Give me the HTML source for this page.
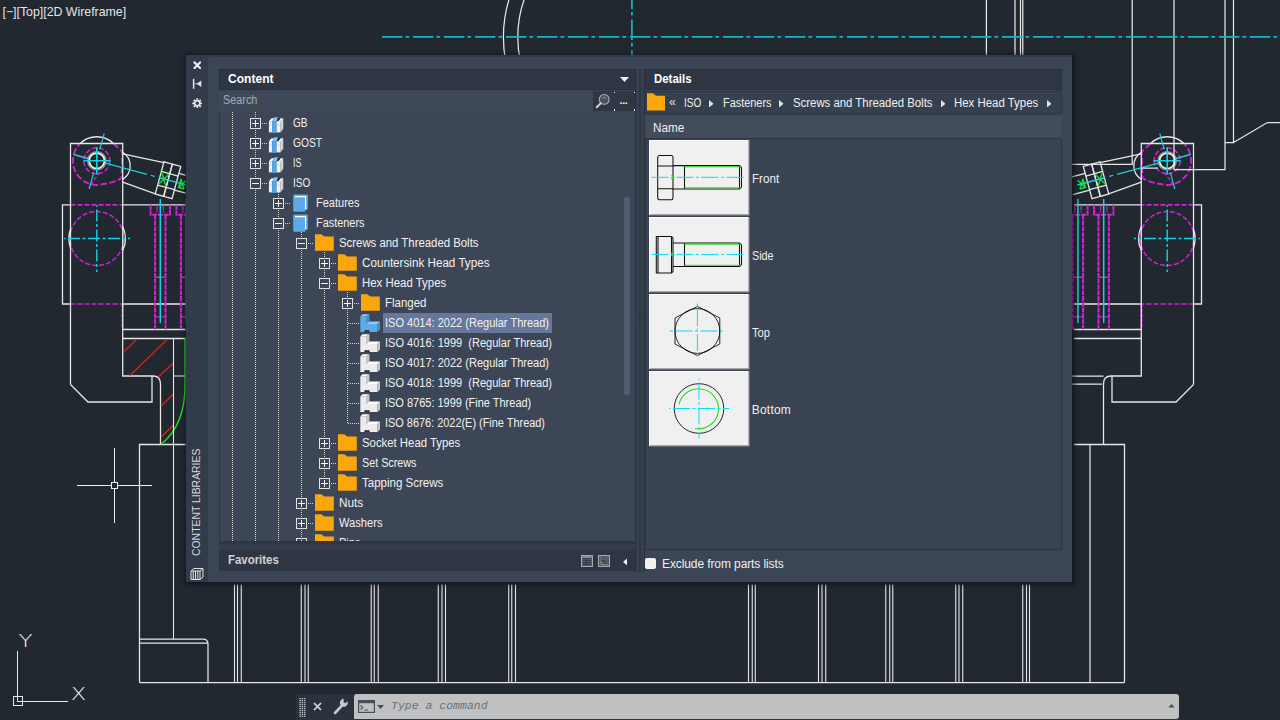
<!DOCTYPE html>
<html lang="en"><head><meta charset="utf-8"><title>Content Libraries</title>
<style>
html,body{margin:0;padding:0}
body{width:1280px;height:720px;overflow:hidden;position:relative;background:#212830;font-family:"Liberation Sans",sans-serif;font-size:12px;color:#f0f0f0}
#bg{position:absolute;left:0;top:0}
.abs{position:absolute}
#vpl{position:absolute;left:2.5px;top:5px;font-size:12.4px;color:#e4e4e4;white-space:nowrap;letter-spacing:-0.03px}
#pal{position:absolute;left:186px;top:55px;width:886px;height:526.5px;background:#323b49;box-shadow:0.5px 0.5px 4px 2px rgba(8,11,16,.55)}
#main{position:absolute;left:21.7px;top:2px;right:0;bottom:0;background:#3c4556;border-top-left-radius:3px}
#strip{position:absolute;left:0;top:0;width:22px;height:526.5px}
#vt{position:absolute;left:3.6px;top:501.3px;transform:rotate(-90deg) scaleX(0.905);transform-origin:0 0;font-size:11.5px;color:#d4d7dc;white-space:nowrap}
.hdr{position:absolute;top:13.7px;height:21px;background:#2e3643;font-weight:bold;font-size:12px;line-height:21.4px;color:#ffffff;box-shadow:inset 0 0 0 1px #29303b}
#search{position:absolute;left:33px;top:36px;width:374.5px;height:20px;background:#3f4858;color:#a4aab3;line-height:19px;font-size:12px}
#sbtn{position:absolute;left:407.3px;top:36px;width:19.7px;height:20px;background:#2f3744}
#dots{position:absolute;left:427px;top:36px;width:22.3px;height:20px;background:#2f3744}
#tree{position:absolute;left:33px;top:57px;width:416.5px;height:429px;overflow:hidden;background:#3d4656;border-bottom:3px solid #2e3643;box-shadow:inset 1px 0 0 0 #303845}
.tlines{position:absolute;left:0;top:0}
.tic{position:absolute;line-height:0}
.tl{position:absolute;height:19px;line-height:19px;white-space:pre;font-size:12px;color:#f2f2f2;padding:0 2.5px}
.tl.sel{background:#66779b;margin-top:-0.7px;height:19.7px;line-height:20.4px;width:164.2px}
.cd{position:absolute;width:1.2px;height:1.4px;background:#f0f0f0}
#sb{position:absolute;left:405px;top:85px;width:5.5px;height:198px;background:#525d70;border-radius:3px}
#gap{position:absolute;left:33px;top:489px;width:416.5px;height:6px;background:#343d4b}
#fav{position:absolute;left:33px;top:495px;width:417px;height:21px;background:#2e3643;font-weight:bold;font-size:12px;line-height:21px;color:#d0d3d8}
#split{position:absolute;left:449.4px;top:13.5px;width:7.4px;height:503px;background:#374050;border-left:1px solid #28303b;border-right:1px solid #2b333f}
#split:before{content:'';position:absolute;left:2.5px;top:0;width:2.6px;height:100%;background:#2f3743}
#bc{position:absolute;left:459px;top:36px;width:416.5px;height:23px;background:#36404e;line-height:25px;white-space:nowrap;box-shadow:inset 0 0 0 1px #2d3542}
#nm{position:absolute;left:459px;top:61px;width:416.5px;height:23px;background:#424c5c;line-height:25px;box-shadow:inset 0 -1px 0 0 #2d3542}
#list{position:absolute;left:459px;top:84px;width:415px;height:410px;border-right:1px solid #2c3441;border-bottom:1px solid #2c3441;border-left:1px solid #2c3441;background:#3a4352}
.thumbs{position:absolute;left:-1px;top:0}
.lbl{position:absolute;left:105.8px;font-size:12px;line-height:14px;white-space:nowrap}
#cb{position:absolute;left:459px;top:503px;width:11px;height:11px;border-radius:2px;background:#f2f2f2}
#cbl{position:absolute;left:476px;top:502px;line-height:15px;white-space:nowrap}
#cmd{position:absolute;left:296px;top:694px;width:883px;height:26px;background:#2b323d}
#cin{position:absolute;left:58px;top:0;width:825px;height:24.7px;background:#bfc0c2;border-radius:3px 3px 3px 0}
#ctx{position:absolute;left:37px;top:4px;font-family:"Liberation Mono",monospace;font-style:italic;font-size:11.5px;color:#6c7076;white-space:pre;line-height:16px}
</style></head><body>
<svg id="bg" width="1280" height="720" viewBox="0 0 1280 720">
<defs><clipPath id="lefthalf"><rect x="0" y="0" width="632" height="60"/></clipPath><clipPath id="leftclip"><rect x="0" y="0" width="185.6" height="720"/></clipPath></defs>
<g clip-path="url(#leftclip)"><g stroke="#d222d6" stroke-width="1.9" fill="none" stroke-dasharray="6.5 2.5">
<path d="M113.5,143.6 L122.3,151.7 L121.5,178 L118,180.2 Q108,184 96.8,185 A24.2,24.2 0 0 1 79.5,144.2"/>
</g>
<g stroke="#d222d6" stroke-width="1.5" fill="none" stroke-dasharray="5 2">
<circle cx="96.8" cy="160.8" r="13"/>
<circle cx="96.8" cy="238.5" r="27"/>
<path d="M70.5,204.8 H122.5 M70.5,304 H122.5" stroke-width="1.7"/>
<path d="M122.5,304 V329.5" stroke-width="1.9" stroke-dasharray="3.5 1.5"/>
<path d="M99.8,171.8 L88.8,187.8" stroke-width="1.2" stroke-dasharray="4 2"/>
</g>
<g stroke="#e6e6e6" stroke-width="1.3" fill="none">
<path d="M70.5,384.5 V143.5 H122.7 V376 H153 Q160.5,376 160.5,384 V444.5"/>
<path d="M70.5,384.5 L88,402 H152 V376"/>
<path d="M190,204.8 H122.5 M70,204.8 H62.5 V304 H70 M122.5,304 H190"/>
<path d="M122.5,329.5 H190 M122.5,338.5 H190"/>
<path d="M190,444.5 H139.5 V682.5"/>
<path d="M80.2,143.5 A24.1,24.1 0 0 1 113.4,143.5" stroke-width="1.5"/>
<path d="M70.5,229 A28.5,28.5 0 0 0 70.5,248"/>
<path d="M122.7,226.5 A28.5,28.5 0 0 1 122.7,250.5"/>
<circle cx="96.8" cy="160.8" r="9.2" stroke="#86a886" stroke-width="1.2"/>
<circle cx="96.8" cy="160.8" r="7.7" stroke="#f4f4f4" stroke-width="1.7"/>
<path d="M122.7,152.2 A16.1,16.1 0 0 1 122.7,179.4"/>
<path d="M122.7,153.8 L164,162.7 M122.7,182.2 L155.4,193.8"/>
<g transform="translate(96.8,160.8) rotate(15.1)">
<rect x="65.1" y="-16.5" width="8.7" height="33.4"/>
<rect x="73.8" y="-16.5" width="8.7" height="33.4"/>
<path d="M65.1,-6.5 H82.5 M65.1,7.7 H82.5"/>
<path d="M82.5,-9.2 H100 M82.5,8 H100"/>
</g>
</g>
<g stroke="#20e020" stroke-width="1.4" fill="none" transform="translate(96.8,160.8) rotate(15.1)">
<path d="M65.6,-5.8 L73.3,6.6 M73.3,-5.8 L65.6,6.6"/>
<path d="M86,-4.5 L91.5,4.5 M91.5,-4.5 L86,4.5 M86,-4.5 V4.5 H91.5"/>
</g>
<g stroke="#18d2e2" stroke-width="1.4" fill="none">
<path d="M83.3,160.8 H110.6 M96.8,147.2 V174.4" stroke-width="1.6"/>
<g transform="translate(96.8,160.8) rotate(15.1)"><path d="M-24,0 H-9 M9,0 H52 M56,0 H60 M64,0 H93" /><path d="M0,-28.5 V-12 M0,12 V29" stroke-width="1.2"/></g>
<path d="M64,238.5 H130" stroke-dasharray="12 2.5 3 2.5" stroke-dashoffset="-4"/>
<path d="M96.8,205.5 V272" stroke-dasharray="12 2.5 3 2.5" stroke-dashoffset="-4"/>
</g>
<g stroke="#d222d6" stroke-width="2" fill="none" stroke-dasharray="5 0.8">
<path d="M150.60000000000002,204.8 V214.8 H170.0 V204.8"/>
<path d="M155.10000000000002,214.8 V329.4 M165.5,214.8 V329.4"/>
<path d="M157.10000000000002,205 V212.5 M163.5,205 V212.5" stroke-width="1.3"/>
<path d="M155.10000000000002,277.3 H165.5 M155.10000000000002,316.9 H165.5" stroke-dasharray="none" stroke-width="1.4"/>
</g>
<path d="M160.3,199 V323" stroke="#18d2e2" stroke-width="1.5" fill="none"/>
<g stroke="#d222d6" stroke-width="2" fill="none" stroke-dasharray="5 0.8">
<path d="M176.4,204.8 V214.8 H195.79999999999998 V204.8"/>
<path d="M180.9,214.8 V329.4 M191.29999999999998,214.8 V329.4"/>
<path d="M182.9,205 V212.5 M189.29999999999998,205 V212.5" stroke-width="1.3"/>
<path d="M180.9,277.3 H191.29999999999998 M180.9,316.9 H191.29999999999998" stroke-dasharray="none" stroke-width="1.4"/>
</g>
<path d="M186.1,199 V323" stroke="#18d2e2" stroke-width="1.5" fill="none"/></g>
<g transform="translate(1264,0) scale(-1,1)"><g stroke="#d222d6" stroke-width="1.9" fill="none" stroke-dasharray="6.5 2.5">
<path d="M113.5,143.6 L122.3,151.7 L121.5,178 L118,180.2 Q108,184 96.8,185 A24.2,24.2 0 0 1 79.5,144.2"/>
</g>
<g stroke="#d222d6" stroke-width="1.5" fill="none" stroke-dasharray="5 2">
<circle cx="96.8" cy="160.8" r="13"/>
<circle cx="96.8" cy="238.5" r="27"/>
<path d="M70.5,204.8 H122.5 M70.5,304 H122.5" stroke-width="1.7"/>
<path d="M122.5,304 V329.5" stroke-width="1.9" stroke-dasharray="3.5 1.5"/>
<path d="M99.8,171.8 L88.8,187.8" stroke-width="1.2" stroke-dasharray="4 2"/>
</g>
<g stroke="#e6e6e6" stroke-width="1.3" fill="none">
<path d="M70.5,384.5 V143.5 H122.7 V376 H153 Q160.5,376 160.5,384 V444.5"/>
<path d="M70.5,384.5 L88,402 H152 V376"/>
<path d="M190,204.8 H122.5 M70,204.8 H62.5 V304 H70 M122.5,304 H190"/>
<path d="M122.5,329.5 H190 M122.5,338.5 H190"/>
<path d="M190,444.5 H139.5 V682.5"/>
<path d="M80.2,143.5 A24.1,24.1 0 0 1 113.4,143.5" stroke-width="1.5"/>
<path d="M70.5,229 A28.5,28.5 0 0 0 70.5,248"/>
<path d="M122.7,226.5 A28.5,28.5 0 0 1 122.7,250.5"/>
<circle cx="96.8" cy="160.8" r="9.2" stroke="#86a886" stroke-width="1.2"/>
<circle cx="96.8" cy="160.8" r="7.7" stroke="#f4f4f4" stroke-width="1.7"/>
<path d="M122.7,152.2 A16.1,16.1 0 0 1 122.7,179.4"/>
<path d="M122.7,153.8 L164,162.7 M122.7,182.2 L155.4,193.8"/>
<g transform="translate(96.8,160.8) rotate(15.1)">
<rect x="65.1" y="-16.5" width="8.7" height="33.4"/>
<rect x="73.8" y="-16.5" width="8.7" height="33.4"/>
<path d="M65.1,-6.5 H82.5 M65.1,7.7 H82.5"/>
<path d="M82.5,-9.2 H100 M82.5,8 H100"/>
</g>
</g>
<g stroke="#20e020" stroke-width="1.4" fill="none" transform="translate(96.8,160.8) rotate(15.1)">
<path d="M65.6,-5.8 L73.3,6.6 M73.3,-5.8 L65.6,6.6"/>
<path d="M86,-4.5 L91.5,4.5 M91.5,-4.5 L86,4.5 M86,-4.5 V4.5 H91.5"/>
</g>
<g stroke="#18d2e2" stroke-width="1.4" fill="none">
<path d="M83.3,160.8 H110.6 M96.8,147.2 V174.4" stroke-width="1.6"/>
<g transform="translate(96.8,160.8) rotate(15.1)"><path d="M-24,0 H-9 M9,0 H52 M56,0 H60 M64,0 H93" /><path d="M0,-28.5 V-12 M0,12 V29" stroke-width="1.2"/></g>
<path d="M64,238.5 H130" stroke-dasharray="12 2.5 3 2.5" stroke-dashoffset="-4"/>
<path d="M96.8,205.5 V272" stroke-dasharray="12 2.5 3 2.5" stroke-dashoffset="-4"/>
</g>
<g stroke="#d222d6" stroke-width="2" fill="none" stroke-dasharray="5 0.8">
<path d="M150.60000000000002,204.8 V214.8 H170.0 V204.8"/>
<path d="M155.10000000000002,214.8 V329.4 M165.5,214.8 V329.4"/>
<path d="M157.10000000000002,205 V212.5 M163.5,205 V212.5" stroke-width="1.3"/>
<path d="M155.10000000000002,277.3 H165.5 M155.10000000000002,316.9 H165.5" stroke-dasharray="none" stroke-width="1.4"/>
</g>
<path d="M160.3,199 V323" stroke="#18d2e2" stroke-width="1.5" fill="none"/>
<g stroke="#d222d6" stroke-width="2" fill="none" stroke-dasharray="5 0.8">
<path d="M176.4,204.8 V214.8 H195.79999999999998 V204.8"/>
<path d="M180.9,214.8 V329.4 M191.29999999999998,214.8 V329.4"/>
<path d="M182.9,205 V212.5 M189.29999999999998,205 V212.5" stroke-width="1.3"/>
<path d="M180.9,277.3 H191.29999999999998 M180.9,316.9 H191.29999999999998" stroke-dasharray="none" stroke-width="1.4"/>
</g>
<path d="M186.1,199 V323" stroke="#18d2e2" stroke-width="1.5" fill="none"/></g>
<g stroke="#e02020" stroke-width="1.2" fill="none">
<path d="M123.5,352 L137,339 M130,375.5 L167,339.5 M158,377 L173.5,363 M161,406 L173.5,394 M161,437 L173.5,425"/>
</g>
<path d="M185,338.5 V384 Q185.5,425 161,444.3" stroke="#20e020" stroke-width="1.4" fill="none"/>
<g stroke="#e6e6e6" stroke-width="1.25" fill="none">
<path d="M173.5,338.5 V639 M173.5,376 H185" stroke-width="1.1"/>
<path d="M139.5,639 H203 Q208,639 208,644 V682.5 M139.5,643 H208"/>
<path d="M1070,376 H1103.5 M1070,384 H1102"/>
<path d="M1090,444.5 V682.5"/>
<path d="M1132.2,0 V164.4 H1070"/>
<path d="M1174,0 V169.5 H1225 V0 M1141.5,168 H1158"/>
<path d="M1233.5,0 V142.5 H1225 M1233.5,142.5 L1267.4,122.5 H1280"/>
<path d="M986.4,0 V56 M1015,0 V56 M1020.5,0 V56 M1022.8,0 V56"/>
<circle cx="632" cy="37" r="128.6" clip-path="url(#lefthalf)"/>
<circle cx="632" cy="37" r="114.2" clip-path="url(#lefthalf)"/>
<path d="M139.5,682.5 H1124.5"/>
<path d="M234.50,584.5 V682.5 M1029.50,584.5 V682.5 M237.50,584.5 V682.5 M1026.50,584.5 V682.5 M241.25,584.5 V682.5 M1022.75,584.5 V682.5 M301.25,584.5 V682.5 M962.75,584.5 V682.5 M305.00,584.5 V682.5 M959.00,584.5 V682.5 M308.25,584.5 V682.5 M955.75,584.5 V682.5 M371.25,584.5 V682.5 M892.75,584.5 V682.5 M374.25,584.5 V682.5 M889.75,584.5 V682.5 M378.25,584.5 V682.5 M885.75,584.5 V682.5 M438.25,584.5 V682.5 M825.75,584.5 V682.5 M442.00,584.5 V682.5 M822.00,584.5 V682.5 M445.50,584.5 V682.5 M818.50,584.5 V682.5 M508.75,584.5 V682.5 M755.25,584.5 V682.5 M511.75,584.5 V682.5 M752.25,584.5 V682.5 M515.50,584.5 V682.5 M748.50,584.5 V682.5" stroke-width="1.1"/>
</g>
<path d="M382,36.9 H1280" stroke="#1ab4c0" stroke-width="1.9" fill="none" stroke-dasharray="20.4 3 3.7 3.9"/>
<path d="M631.9,0 V56" stroke="#1ab4c0" stroke-width="1.7" fill="none" stroke-dasharray="20.4 3 3.7 3.9" stroke-dashoffset="11.5"/>
<g stroke="#f0f0f0" stroke-width="1" fill="none" shape-rendering="crispEdges">
<path d="M77,485.5 H111 M118,485.5 H152 M114.5,448 V482 M114.5,489 V522.5"/>
<rect x="111.5" y="482.5" width="6" height="6"/>
</g>
<g stroke="#e8e8e8" stroke-width="1" fill="none" shape-rendering="crispEdges">
<rect x="13.5" y="696.5" width="9" height="9"/>
<path d="M17.5,651 V701.5 H67.5"/>
</g>
<g fill="#f0f0f0" font-family="DejaVu Sans Light, DejaVu Sans, Liberation Sans, sans-serif" font-weight="200" font-size="17" text-anchor="middle">
<text x="25.5" y="647.2" transform="translate(25.5,0) scale(1.36,1) translate(-25.5,0)">Y</text>
<text x="78.5" y="700.4" transform="translate(78.5,0) scale(1.33,1) translate(-78.5,0)">X</text>
</g>
</svg>
<div id="vpl">[−][Top][2D Wireframe]</div>
<div id="pal">
<div id="main"></div><div id="strip">
<svg class="abs" style="left:6.7px;top:5.8px" width="8.6" height="8.6" viewBox="0 0 8.6 8.6"><path d="M0.8,0.8 L7.8,7.8 M7.8,0.8 L0.8,7.8" stroke="#f0f0f0" stroke-width="2.1"/></svg>
<svg class="abs" style="left:6px;top:23px" width="10" height="12" viewBox="0 0 10 12"><path d="M1.6,0.8 V10.8" stroke="#e4e4e4" stroke-width="1.5"/><path d="M4.6,5.8 L9.3,2.6 V9Z" fill="#e4e4e4"/><path d="M2.3,5.8 H5" stroke="#b8bcc4" stroke-width="1"/></svg>
<svg class="abs" style="left:5.7px;top:42.7px" width="10.6" height="10.6" viewBox="0 0 12 12"><g stroke="#e8e8e8" stroke-width="2"><path d="M6,0.3 V11.7 M0.3,6 H11.7 M2,2 L10,10 M10,2 L2,10"/></g><circle cx="6" cy="6" r="3.6" fill="#e8e8e8"/><circle cx="6" cy="6" r="1.9" fill="#323b49"/></svg>
<div id="vt">CONTENT LIBRARIES</div>
<svg class="abs" style="left:4px;top:512px" width="14" height="14" viewBox="0 0 14 14"><g stroke="#e0e0e0" stroke-width="1" fill="none"><path d="M1,4 L4,1.5 H13 L10,4Z M1,4 V12.5 H10 V4 M10,12.5 L13,10 V1.5 M3.2,4 V12.5 M5.5,4 V12.5 M7.8,4 V12.5"/></g></svg>
</div>
<div class="hdr" style="left:33px;width:416.5px"><span style="margin-left:9px;letter-spacing:0.046px">Content</span><svg class="abs" style="left:401px;top:8px" width="9" height="5" viewBox="0 0 9 5"><path d="M0,0 H9 L4.5,5Z" fill="#f0f0f0"/></svg></div>
<div id="search"><span style="margin-left:4px;display:inline-block;transform:scaleX(0.9047);transform-origin:0 50%">Search</span></div>
<div id="sbtn"><svg class="abs" style="left:2px;top:2px" width="16" height="17" viewBox="0 0 16 17"><circle cx="9.2" cy="6.4" r="4.9" stroke="#a9aeb6" stroke-width="1.1" fill="#4a5261"/><ellipse cx="9.4" cy="4.6" rx="2.2" ry="1.2" fill="#6a7280"/><path d="M5.6,10.4 L1.7,14.2" stroke="#d6d6d6" stroke-width="2" stroke-linecap="round"/></svg></div>
<div id="dots"><span style="position:absolute;left:6.6px;top:2.2px;font-size:10.5px;font-weight:bold;letter-spacing:-0.3px;color:#f4f4f4;line-height:14px">...</span><i class="cd" style="left:0.5px;top:0.8px"></i><i class="cd" style="left:20.8px;top:0.8px"></i><i class="cd" style="left:0.5px;top:18.2px"></i><i class="cd" style="left:20.8px;top:18.2px"></i></div>
<div id="tree"><svg class="tlines" width="417" height="429" viewBox="0 0 417 429" shape-rendering="crispEdges">
<g stroke="#d8d8d8" stroke-width="1" stroke-dasharray="1 1" fill="none">
<path d="M13.5,0 V429"/>
<path d="M36.5,0 V429"/>
<path d="M59.5,80 V429"/>
<path d="M82.5,120 V429"/>
<path d="M105.5,140 V371"/>
<path d="M128.5,180 V311"/>
<path d="M43.0,11.5 H49.0"/>
<path d="M43.0,31.5 H49.0"/>
<path d="M43.0,51.5 H49.0"/>
<path d="M43.0,71.5 H49.0"/>
<path d="M66.0,91.5 H72.0"/>
<path d="M66.0,111.5 H72.0"/>
<path d="M89.0,131.5 H95.0"/>
<path d="M112.0,151.5 H118.0"/>
<path d="M112.0,171.5 H118.0"/>
<path d="M135.0,191.5 H141.0"/>
<path d="M129.0,211.5 H141.0"/>
<path d="M129.0,231.5 H141.0"/>
<path d="M129.0,251.5 H141.0"/>
<path d="M129.0,271.5 H141.0"/>
<path d="M129.0,291.5 H141.0"/>
<path d="M129.0,311.5 H141.0"/>
<path d="M112.0,331.5 H118.0"/>
<path d="M112.0,351.5 H118.0"/>
<path d="M112.0,371.5 H118.0"/>
<path d="M89.0,391.5 H95.0"/>
<path d="M89.0,411.5 H95.0"/>
<path d="M89.0,431.5 H95.0"/>
</g>
<rect x="31.5" y="6.5" width="10" height="10" fill="#3d4656" stroke="#e4e4e4" stroke-width="1"/>
<path d="M33.0,11.5 H40.0" stroke="#f4f4f4" stroke-width="1"/>
<path d="M36.5,8.0 V15.0" stroke="#f4f4f4" stroke-width="1"/>
<rect x="31.5" y="26.5" width="10" height="10" fill="#3d4656" stroke="#e4e4e4" stroke-width="1"/>
<path d="M33.0,31.5 H40.0" stroke="#f4f4f4" stroke-width="1"/>
<path d="M36.5,28.0 V35.0" stroke="#f4f4f4" stroke-width="1"/>
<rect x="31.5" y="46.5" width="10" height="10" fill="#3d4656" stroke="#e4e4e4" stroke-width="1"/>
<path d="M33.0,51.5 H40.0" stroke="#f4f4f4" stroke-width="1"/>
<path d="M36.5,48.0 V55.0" stroke="#f4f4f4" stroke-width="1"/>
<rect x="31.5" y="66.5" width="10" height="10" fill="#3d4656" stroke="#e4e4e4" stroke-width="1"/>
<path d="M33.0,71.5 H40.0" stroke="#f4f4f4" stroke-width="1"/>
<rect x="54.5" y="86.5" width="10" height="10" fill="#3d4656" stroke="#e4e4e4" stroke-width="1"/>
<path d="M56.0,91.5 H63.0" stroke="#f4f4f4" stroke-width="1"/>
<path d="M59.5,88.0 V95.0" stroke="#f4f4f4" stroke-width="1"/>
<rect x="54.5" y="106.5" width="10" height="10" fill="#3d4656" stroke="#e4e4e4" stroke-width="1"/>
<path d="M56.0,111.5 H63.0" stroke="#f4f4f4" stroke-width="1"/>
<rect x="77.5" y="126.5" width="10" height="10" fill="#3d4656" stroke="#e4e4e4" stroke-width="1"/>
<path d="M79.0,131.5 H86.0" stroke="#f4f4f4" stroke-width="1"/>
<rect x="100.5" y="146.5" width="10" height="10" fill="#3d4656" stroke="#e4e4e4" stroke-width="1"/>
<path d="M102.0,151.5 H109.0" stroke="#f4f4f4" stroke-width="1"/>
<path d="M105.5,148.0 V155.0" stroke="#f4f4f4" stroke-width="1"/>
<rect x="100.5" y="166.5" width="10" height="10" fill="#3d4656" stroke="#e4e4e4" stroke-width="1"/>
<path d="M102.0,171.5 H109.0" stroke="#f4f4f4" stroke-width="1"/>
<rect x="123.5" y="186.5" width="10" height="10" fill="#3d4656" stroke="#e4e4e4" stroke-width="1"/>
<path d="M125.0,191.5 H132.0" stroke="#f4f4f4" stroke-width="1"/>
<path d="M128.5,188.0 V195.0" stroke="#f4f4f4" stroke-width="1"/>
<rect x="100.5" y="326.5" width="10" height="10" fill="#3d4656" stroke="#e4e4e4" stroke-width="1"/>
<path d="M102.0,331.5 H109.0" stroke="#f4f4f4" stroke-width="1"/>
<path d="M105.5,328.0 V335.0" stroke="#f4f4f4" stroke-width="1"/>
<rect x="100.5" y="346.5" width="10" height="10" fill="#3d4656" stroke="#e4e4e4" stroke-width="1"/>
<path d="M102.0,351.5 H109.0" stroke="#f4f4f4" stroke-width="1"/>
<path d="M105.5,348.0 V355.0" stroke="#f4f4f4" stroke-width="1"/>
<rect x="100.5" y="366.5" width="10" height="10" fill="#3d4656" stroke="#e4e4e4" stroke-width="1"/>
<path d="M102.0,371.5 H109.0" stroke="#f4f4f4" stroke-width="1"/>
<path d="M105.5,368.0 V375.0" stroke="#f4f4f4" stroke-width="1"/>
<rect x="77.5" y="386.5" width="10" height="10" fill="#3d4656" stroke="#e4e4e4" stroke-width="1"/>
<path d="M79.0,391.5 H86.0" stroke="#f4f4f4" stroke-width="1"/>
<path d="M82.5,388.0 V395.0" stroke="#f4f4f4" stroke-width="1"/>
<rect x="77.5" y="406.5" width="10" height="10" fill="#3d4656" stroke="#e4e4e4" stroke-width="1"/>
<path d="M79.0,411.5 H86.0" stroke="#f4f4f4" stroke-width="1"/>
<path d="M82.5,408.0 V415.0" stroke="#f4f4f4" stroke-width="1"/>
<rect x="77.5" y="426.5" width="10" height="10" fill="#3d4656" stroke="#e4e4e4" stroke-width="1"/>
<path d="M79.0,431.5 H86.0" stroke="#f4f4f4" stroke-width="1"/>
<path d="M82.5,428.0 V435.0" stroke="#f4f4f4" stroke-width="1"/>
</svg>
<div class="tic" style="left:49.0px;top:5px"><svg class="ic" width="16" height="16" viewBox="0 0 16 16"><path d="M12.3,4.2 L15.25,1.25 V11.7 L12.3,15.4Z" fill="#d4d4d4"/><path d="M0.9,4.2 L3.6,1.2 H6.2 L4.2,4.2Z" fill="#ffffff"/><path d="M4.2,4.2 L6.6,0.3 H10 L8.6,4.2Z" fill="#7cc4f8"/><path d="M8.6,4.2 L9.9,1.3 H12.4 L10.4,4.2Z" fill="#0f3a44"/><path d="M10.4,4.2 L12.8,1.25 H15.25 L12.3,4.2Z" fill="#ffffff"/><rect x="0.9" y="4.2" width="3.3" height="11.2" fill="#f1f1f1"/><rect x="4.2" y="4.2" width="4.4" height="11.7" fill="#4fabf0"/><rect x="8.6" y="4.2" width="3.7" height="11.2" fill="#f1f1f1"/><path d="M0.9,8.2 H12.3" stroke="#9aa0a8" stroke-width="0.5" opacity="0.7"/></svg></div>
<div class="tl" style="left:71.6px;top:2px"><span style="display:inline-block;transform:scaleX(0.8363);transform-origin:0 50%">GB</span></div>
<div class="tic" style="left:49.0px;top:25px"><svg class="ic" width="16" height="16" viewBox="0 0 16 16"><path d="M12.3,4.2 L15.25,1.25 V11.7 L12.3,15.4Z" fill="#d4d4d4"/><path d="M0.9,4.2 L3.6,1.2 H6.2 L4.2,4.2Z" fill="#ffffff"/><path d="M4.2,4.2 L6.6,0.3 H10 L8.6,4.2Z" fill="#7cc4f8"/><path d="M8.6,4.2 L9.9,1.3 H12.4 L10.4,4.2Z" fill="#0f3a44"/><path d="M10.4,4.2 L12.8,1.25 H15.25 L12.3,4.2Z" fill="#ffffff"/><rect x="0.9" y="4.2" width="3.3" height="11.2" fill="#f1f1f1"/><rect x="4.2" y="4.2" width="4.4" height="11.7" fill="#4fabf0"/><rect x="8.6" y="4.2" width="3.7" height="11.2" fill="#f1f1f1"/><path d="M0.9,8.2 H12.3" stroke="#9aa0a8" stroke-width="0.5" opacity="0.7"/></svg></div>
<div class="tl" style="left:71.6px;top:22px"><span style="display:inline-block;transform:scaleX(0.8529);transform-origin:0 50%">GOST</span></div>
<div class="tic" style="left:49.0px;top:45px"><svg class="ic" width="16" height="16" viewBox="0 0 16 16"><path d="M12.3,4.2 L15.25,1.25 V11.7 L12.3,15.4Z" fill="#d4d4d4"/><path d="M0.9,4.2 L3.6,1.2 H6.2 L4.2,4.2Z" fill="#ffffff"/><path d="M4.2,4.2 L6.6,0.3 H10 L8.6,4.2Z" fill="#7cc4f8"/><path d="M8.6,4.2 L9.9,1.3 H12.4 L10.4,4.2Z" fill="#0f3a44"/><path d="M10.4,4.2 L12.8,1.25 H15.25 L12.3,4.2Z" fill="#ffffff"/><rect x="0.9" y="4.2" width="3.3" height="11.2" fill="#f1f1f1"/><rect x="4.2" y="4.2" width="4.4" height="11.7" fill="#4fabf0"/><rect x="8.6" y="4.2" width="3.7" height="11.2" fill="#f1f1f1"/><path d="M0.9,8.2 H12.3" stroke="#9aa0a8" stroke-width="0.5" opacity="0.7"/></svg></div>
<div class="tl" style="left:71.6px;top:42px"><span style="display:inline-block;transform:scaleX(0.7497);transform-origin:0 50%">IS</span></div>
<div class="tic" style="left:49.0px;top:65px"><svg class="ic" width="16" height="16" viewBox="0 0 16 16"><path d="M12.3,4.2 L15.25,1.25 V11.7 L12.3,15.4Z" fill="#d4d4d4"/><path d="M0.9,4.2 L3.6,1.2 H6.2 L4.2,4.2Z" fill="#ffffff"/><path d="M4.2,4.2 L6.6,0.3 H10 L8.6,4.2Z" fill="#7cc4f8"/><path d="M8.6,4.2 L9.9,1.3 H12.4 L10.4,4.2Z" fill="#0f3a44"/><path d="M10.4,4.2 L12.8,1.25 H15.25 L12.3,4.2Z" fill="#ffffff"/><rect x="0.9" y="4.2" width="3.3" height="11.2" fill="#f1f1f1"/><rect x="4.2" y="4.2" width="4.4" height="11.7" fill="#4fabf0"/><rect x="8.6" y="4.2" width="3.7" height="11.2" fill="#f1f1f1"/><path d="M0.9,8.2 H12.3" stroke="#9aa0a8" stroke-width="0.5" opacity="0.7"/></svg></div>
<div class="tl" style="left:71.6px;top:62px"><span style="display:inline-block;transform:scaleX(0.8345);transform-origin:0 50%">ISO</span></div>
<div class="tic" style="left:74.2px;top:82px"><svg class="ic" width="15" height="18" viewBox="0 0 15 18"><path d="M1.5,0.4 H14.8 V15.6 H12.4 V17.8 H1.8 Q0.2,17.8 0.2,16.2 V1.8 Q0.2,0.4 1.5,0.4Z" fill="#5eaae6"/><path d="M2,2.6 H12.6 V15.6" stroke="#ffffff" stroke-width="1.1" fill="none"/></svg></div>
<div class="tl" style="left:94.6px;top:82px"><span style="display:inline-block;transform:scaleX(0.9186);transform-origin:0 50%">Features</span></div>
<div class="tic" style="left:74.2px;top:102px"><svg class="ic" width="15" height="18" viewBox="0 0 15 18"><path d="M1.5,0.4 H14.8 V15.6 H12.4 V17.8 H1.8 Q0.2,17.8 0.2,16.2 V1.8 Q0.2,0.4 1.5,0.4Z" fill="#5eaae6"/><path d="M2,2.6 H12.6 V15.6" stroke="#ffffff" stroke-width="1.1" fill="none"/></svg></div>
<div class="tl" style="left:94.6px;top:102px"><span style="display:inline-block;transform:scaleX(0.9090);transform-origin:0 50%">Fasteners</span></div>
<div class="tic" style="left:96.1px;top:122px"><svg class="ic" width="19" height="17" viewBox="0 0 19 17"><path d="M0,0.3 H6.2 L9.4,2.6 H18.8 V16.7 H0Z" fill="#fba70c"/></svg></div>
<div class="tl" style="left:117.6px;top:122px"><span style="display:inline-block;transform:scaleX(0.9477);transform-origin:0 50%">Screws and Threaded Bolts</span></div>
<div class="tic" style="left:119.1px;top:142px"><svg class="ic" width="19" height="17" viewBox="0 0 19 17"><path d="M0,0.3 H6.2 L9.4,2.6 H18.8 V16.7 H0Z" fill="#fba70c"/></svg></div>
<div class="tl" style="left:140.6px;top:142px"><span style="display:inline-block;transform:scaleX(0.9719);transform-origin:0 50%">Countersink Head Types</span></div>
<div class="tic" style="left:119.1px;top:162px"><svg class="ic" width="19" height="17" viewBox="0 0 19 17"><path d="M0,0.3 H6.2 L9.4,2.6 H18.8 V16.7 H0Z" fill="#fba70c"/></svg></div>
<div class="tl" style="left:140.6px;top:162px"><span style="display:inline-block;transform:scaleX(0.9515);transform-origin:0 50%">Hex Head Types</span></div>
<div class="tic" style="left:142.1px;top:182px"><svg class="ic" width="19" height="17" viewBox="0 0 19 17"><path d="M0,0.3 H6.2 L9.4,2.6 H18.8 V16.7 H0Z" fill="#fba70c"/></svg></div>
<div class="tl" style="left:163.6px;top:182px"><span style="display:inline-block;transform:scaleX(0.9570);transform-origin:0 50%">Flanged</span></div>
<div class="tic" style="left:141.0px;top:202px"><svg class="ic" width="20" height="18" viewBox="0 0 20 18"><path d="M0.3,2.5 H6 V10 H17.5 V17.9 H0.3Z" fill="#5cacea"/><path d="M0.3,2.5 L2.6,0.2 H9.5 L6,2.5Z" fill="#8ecbf6"/><path d="M6,2.5 L9.5,0.2 V7.6 L6,10Z" fill="#3f92d6"/><path d="M6,10 L9.5,7.6 H20 L17.5,10Z" fill="#8ecbf6"/><path d="M17.5,10 L20,7.6 V15.4 L17.5,17.9Z" fill="#3f92d6"/><rect x="4.4" y="16.2" width="5.2" height="1.8" fill="#293040"/></svg></div>
<div class="tl sel" style="left:163.6px;top:202px"><span style="display:inline-block;transform:scaleX(0.9185);transform-origin:0 50%">ISO 4014: 2022 (Regular Thread)</span></div>
<div class="tic" style="left:141.0px;top:222px"><svg class="ic" width="20" height="18" viewBox="0 0 20 18"><path d="M0.3,2.5 H6 V10 H17.5 V17.9 H0.3Z" fill="#ececec"/><path d="M0.3,2.5 L2.6,0.2 H9.5 L6,2.5Z" fill="#ffffff"/><path d="M6,2.5 L9.5,0.2 V7.6 L6,10Z" fill="#c6c6c6"/><path d="M6,10 L9.5,7.6 H20 L17.5,10Z" fill="#ffffff"/><path d="M17.5,10 L20,7.6 V15.4 L17.5,17.9Z" fill="#c6c6c6"/><rect x="4.4" y="16.2" width="5.2" height="1.8" fill="#293040"/></svg></div>
<div class="tl" style="left:163.6px;top:222px"><span style="display:inline-block;transform:scaleX(0.9181);transform-origin:0 50%">ISO 4016: 1999  (Regular Thread)</span></div>
<div class="tic" style="left:141.0px;top:242px"><svg class="ic" width="20" height="18" viewBox="0 0 20 18"><path d="M0.3,2.5 H6 V10 H17.5 V17.9 H0.3Z" fill="#ececec"/><path d="M0.3,2.5 L2.6,0.2 H9.5 L6,2.5Z" fill="#ffffff"/><path d="M6,2.5 L9.5,0.2 V7.6 L6,10Z" fill="#c6c6c6"/><path d="M6,10 L9.5,7.6 H20 L17.5,10Z" fill="#ffffff"/><path d="M17.5,10 L20,7.6 V15.4 L17.5,17.9Z" fill="#c6c6c6"/><rect x="4.4" y="16.2" width="5.2" height="1.8" fill="#293040"/></svg></div>
<div class="tl" style="left:163.6px;top:242px"><span style="display:inline-block;transform:scaleX(0.9185);transform-origin:0 50%">ISO 4017: 2022 (Regular Thread)</span></div>
<div class="tic" style="left:141.0px;top:262px"><svg class="ic" width="20" height="18" viewBox="0 0 20 18"><path d="M0.3,2.5 H6 V10 H17.5 V17.9 H0.3Z" fill="#ececec"/><path d="M0.3,2.5 L2.6,0.2 H9.5 L6,2.5Z" fill="#ffffff"/><path d="M6,2.5 L9.5,0.2 V7.6 L6,10Z" fill="#c6c6c6"/><path d="M6,10 L9.5,7.6 H20 L17.5,10Z" fill="#ffffff"/><path d="M17.5,10 L20,7.6 V15.4 L17.5,17.9Z" fill="#c6c6c6"/><rect x="4.4" y="16.2" width="5.2" height="1.8" fill="#293040"/></svg></div>
<div class="tl" style="left:163.6px;top:262px"><span style="display:inline-block;transform:scaleX(0.9181);transform-origin:0 50%">ISO 4018: 1999  (Regular Thread)</span></div>
<div class="tic" style="left:141.0px;top:282px"><svg class="ic" width="20" height="18" viewBox="0 0 20 18"><path d="M0.3,2.5 H6 V10 H17.5 V17.9 H0.3Z" fill="#ececec"/><path d="M0.3,2.5 L2.6,0.2 H9.5 L6,2.5Z" fill="#ffffff"/><path d="M6,2.5 L9.5,0.2 V7.6 L6,10Z" fill="#c6c6c6"/><path d="M6,10 L9.5,7.6 H20 L17.5,10Z" fill="#ffffff"/><path d="M17.5,10 L20,7.6 V15.4 L17.5,17.9Z" fill="#c6c6c6"/><rect x="4.4" y="16.2" width="5.2" height="1.8" fill="#293040"/></svg></div>
<div class="tl" style="left:163.6px;top:282px"><span style="display:inline-block;transform:scaleX(0.9148);transform-origin:0 50%">ISO 8765: 1999 (Fine Thread)</span></div>
<div class="tic" style="left:141.0px;top:302px"><svg class="ic" width="20" height="18" viewBox="0 0 20 18"><path d="M0.3,2.5 H6 V10 H17.5 V17.9 H0.3Z" fill="#ececec"/><path d="M0.3,2.5 L2.6,0.2 H9.5 L6,2.5Z" fill="#ffffff"/><path d="M6,2.5 L9.5,0.2 V7.6 L6,10Z" fill="#c6c6c6"/><path d="M6,10 L9.5,7.6 H20 L17.5,10Z" fill="#ffffff"/><path d="M17.5,10 L20,7.6 V15.4 L17.5,17.9Z" fill="#c6c6c6"/><rect x="4.4" y="16.2" width="5.2" height="1.8" fill="#293040"/></svg></div>
<div class="tl" style="left:163.6px;top:302px"><span style="display:inline-block;transform:scaleX(0.9097);transform-origin:0 50%">ISO 8676: 2022(E) (Fine Thread)</span></div>
<div class="tic" style="left:119.1px;top:322px"><svg class="ic" width="19" height="17" viewBox="0 0 19 17"><path d="M0,0.3 H6.2 L9.4,2.6 H18.8 V16.7 H0Z" fill="#fba70c"/></svg></div>
<div class="tl" style="left:140.6px;top:322px"><span style="display:inline-block;transform:scaleX(0.9461);transform-origin:0 50%">Socket Head Types</span></div>
<div class="tic" style="left:119.1px;top:342px"><svg class="ic" width="19" height="17" viewBox="0 0 19 17"><path d="M0,0.3 H6.2 L9.4,2.6 H18.8 V16.7 H0Z" fill="#fba70c"/></svg></div>
<div class="tl" style="left:140.6px;top:342px"><span style="display:inline-block;transform:scaleX(0.8980);transform-origin:0 50%">Set Screws</span></div>
<div class="tic" style="left:119.1px;top:362px"><svg class="ic" width="19" height="17" viewBox="0 0 19 17"><path d="M0,0.3 H6.2 L9.4,2.6 H18.8 V16.7 H0Z" fill="#fba70c"/></svg></div>
<div class="tl" style="left:140.6px;top:362px"><span style="display:inline-block;transform:scaleX(0.9597);transform-origin:0 50%">Tapping Screws</span></div>
<div class="tic" style="left:96.1px;top:382px"><svg class="ic" width="19" height="17" viewBox="0 0 19 17"><path d="M0,0.3 H6.2 L9.4,2.6 H18.8 V16.7 H0Z" fill="#fba70c"/></svg></div>
<div class="tl" style="left:117.6px;top:382px"><span style="display:inline-block;transform:scaleX(0.9808);transform-origin:0 50%">Nuts</span></div>
<div class="tic" style="left:96.1px;top:402px"><svg class="ic" width="19" height="17" viewBox="0 0 19 17"><path d="M0,0.3 H6.2 L9.4,2.6 H18.8 V16.7 H0Z" fill="#fba70c"/></svg></div>
<div class="tl" style="left:117.6px;top:402px"><span style="display:inline-block;transform:scaleX(0.9275);transform-origin:0 50%">Washers</span></div>
<div class="tic" style="left:96.1px;top:422px"><svg class="ic" width="19" height="17" viewBox="0 0 19 17"><path d="M0,0.3 H6.2 L9.4,2.6 H18.8 V16.7 H0Z" fill="#fba70c"/></svg></div>
<div class="tl" style="left:117.6px;top:422px"><span style="display:inline-block;transform:scaleX(0.9210);transform-origin:0 50%">Pins</span></div><div id="sb"></div></div>
<div id="gap"></div>
<div id="fav"><span style="margin-left:9.3px;display:inline-block;transform:scaleX(0.9521);transform-origin:0 50%">Favorites</span>
<svg class="abs" style="left:362px;top:5px" width="12" height="12" viewBox="0 0 12 12"><rect x="0.5" y="0.5" width="11" height="11" fill="#565e6c" stroke="#a4a9b1" stroke-width="1"/><path d="M2,3.2 H10 M2,5.4 H10 M2,7.6 H10 M2,9.6 H10 M5.6,4 V10" stroke="#2d3440" stroke-width="0.9" fill="none"/><path d="M1.5,2 H10.5" stroke="#bfc3c9" stroke-width="1"/></svg>
<svg class="abs" style="left:379px;top:5px" width="12" height="12" viewBox="0 0 12 12"><rect x="0.5" y="0.5" width="11" height="11" fill="#565e6c" stroke="#a4a9b1" stroke-width="1"/><path d="M3,2 V9.5 H10" stroke="#8d939c" stroke-width="0.9" fill="none"/><circle cx="4.6" cy="4.6" r="1.5" fill="#20262f"/><circle cx="7.6" cy="7.6" r="1.5" fill="#20262f"/><circle cx="4.9" cy="4.3" r="0.6" fill="#e8e8e8"/><circle cx="7.9" cy="7.3" r="0.6" fill="#e8e8e8"/></svg>
<svg class="abs" style="left:403.7px;top:7.6px" width="4.6" height="7.8" viewBox="0 0 4.6 7.8"><path d="M4.6,0 V7.8 L0,3.9Z" fill="#f0f0f0"/></svg>
</div>
<div id="split"><div style="position:absolute;left:1.5px;top:248.5px;width:5px;height:5px;border-radius:3px;background:#2f3744"></div></div>
<div class="hdr" style="left:459px;width:416.5px"><span style="margin-left:8.8px;display:inline-block;transform:scaleX(0.9529);transform-origin:0 50%">Details</span></div>
<div id="bc">
<svg class="abs" style="left:2.2px;top:2.3px" width="18" height="17.5" viewBox="0 0 18 17.5"><path d="M0,0.3 H6 L9,2.8 H18 V17.5 H0Z" fill="#fba70c"/></svg>
<span class="abs" style="left:24px;top:-1.4px;font-size:12.5px;color:#e0e0e0">«</span>
<span class="abs" style="left:38.9px;display:inline-block;transform:scaleX(0.8345);transform-origin:0 50%">ISO</span><svg class="abs" style="left:64.2px;top:8.6px" width="4.6" height="7.6" viewBox="0 0 4.6 7.6"><path d="M0,0 L4.6,3.8 L0,7.6Z" fill="#e2e2e2"/></svg>
<span class="abs" style="left:78px;display:inline-block;transform:scaleX(0.9090);transform-origin:0 50%">Fasteners</span><svg class="abs" style="left:134.2px;top:8.6px" width="4.6" height="7.6" viewBox="0 0 4.6 7.6"><path d="M0,0 L4.6,3.8 L0,7.6Z" fill="#e2e2e2"/></svg>
<span class="abs" style="left:147.7px;display:inline-block;transform:scaleX(0.9477);transform-origin:0 50%">Screws and Threaded Bolts</span><svg class="abs" style="left:295.7px;top:8.6px" width="4.6" height="7.6" viewBox="0 0 4.6 7.6"><path d="M0,0 L4.6,3.8 L0,7.6Z" fill="#e2e2e2"/></svg>
<span class="abs" style="left:308.8px;display:inline-block;transform:scaleX(0.9515);transform-origin:0 50%">Hex Head Types</span><svg class="abs" style="left:401.7px;top:8.6px" width="4.6" height="7.6" viewBox="0 0 4.6 7.6"><path d="M0,0 L4.6,3.8 L0,7.6Z" fill="#e2e2e2"/></svg>
</div>
<div id="nm"><span style="margin-left:7.9px;display:inline-block;transform:scaleX(0.9762);transform-origin:0 50%">Name</span></div>
<div id="list"><svg class="thumbs" width="110" height="310" viewBox="645 139 110 310">
<rect x="649" y="140" width="100" height="75" fill="#f0f0f0"/>
<path d="M649.5,214.8 H749 V140" stroke="#8e8e8e" stroke-width="1.2" fill="none"/>
<path d="M649.5,215 V140.5 H748" stroke="#ffffff" stroke-width="1" fill="none"/>
<rect x="649" y="217" width="100" height="75" fill="#f0f0f0"/>
<path d="M649.5,291.8 H749 V217" stroke="#8e8e8e" stroke-width="1.2" fill="none"/>
<path d="M649.5,292 V217.5 H748" stroke="#ffffff" stroke-width="1" fill="none"/>
<rect x="649" y="294" width="100" height="75" fill="#f0f0f0"/>
<path d="M649.5,368.8 H749 V294" stroke="#8e8e8e" stroke-width="1.2" fill="none"/>
<path d="M649.5,369 V294.5 H748" stroke="#ffffff" stroke-width="1" fill="none"/>
<rect x="649" y="371" width="100" height="75" fill="#f0f0f0"/>
<path d="M649.5,445.8 H749 V371" stroke="#8e8e8e" stroke-width="1.2" fill="none"/>
<path d="M649.5,446 V371.5 H748" stroke="#ffffff" stroke-width="1" fill="none"/>
<g stroke="#101010" stroke-width="1.05" fill="none">
<path d="M659.5,155.5 H671.5 Q673,155.5 673,157.5 V197.5 Q673,199.7 671.5,199.7 H659.5 Q657.7,199.7 657.7,197.5 V157.5 Q657.7,155.5 659.5,155.5Z"/>
<path d="M657.7,166 H673 M657.7,188.8 H673"/>
<path d="M673,165.6 H739.5 L741.5,167.6 V187 L739.5,189 H673"/>
<path d="M684.5,165.6 V189 M739.5,165.6 V189"/>
</g>
<path d="M684.5,166.8 H740.5 M684.5,187.8 H740.5" stroke="#20e020" stroke-width="1" fill="none"/>
<path d="M651.5,177.3 H746.5" stroke="#00e0f0" stroke-width="1" fill="none" stroke-dasharray="17 2.5 3 2.5"/>
<path d="M671,175.5 L674.5,177.3 L671,179" stroke="#20e020" stroke-width="0.9" fill="none"/>
<g stroke="#101010" stroke-width="1.05" fill="none">
<path d="M656.3,236.5 H671.5 L673,238 V271.5 L671.5,273 H656.3Z"/>
<path d="M658,236.5 V273 M671.5,236.5 V273"/>
<path d="M673,243 H739.5 L741.5,245 V264.5 L739.5,266.5 H673"/>
<path d="M684.5,243 V266.5 M739.5,243 V266.5"/>
</g>
<path d="M684.5,244.2 H740.5 M684.5,265.3 H740.5" stroke="#20e020" stroke-width="1" fill="none"/>
<path d="M651.5,254.4 H746.5" stroke="#00e0f0" stroke-width="1" fill="none" stroke-dasharray="17 2.5 3 2.5"/>
<path d="M671,252.5 L674.5,254.4 L671,256" stroke="#20e020" stroke-width="0.9" fill="none"/>
<g stroke="#101010" stroke-width="0.9" fill="none">
<path d="M697.4,306.4 L719.8,318 V344 L697.4,355.6 L675.0,344 V318Z"/>
<circle cx="697.4" cy="331" r="22.4"/>
</g>
<path d="M669.4,331 H725.4 M697.4,303 V359" stroke="#00e0f0" stroke-width="1" fill="none" stroke-dasharray="17 2.5 3 2.5" stroke-dashoffset="-6"/>
<circle cx="699" cy="408.5" r="24.8" stroke="#101010" stroke-width="0.9" fill="none"/>
<path d="M679,404.5 A20,20 0 1 1 695,428.5" stroke="#20e020" stroke-width="1.1" fill="none"/>
<path d="M669,408.5 H729 M699,378.5 V438.5" stroke="#00e0f0" stroke-width="1" fill="none" stroke-dasharray="17 2.5 3 2.5" stroke-dashoffset="-4"/>
</svg>
<div class="lbl" style="top:32.5px;display:inline-block;transform:scaleX(0.9711);transform-origin:0 50%">Front</div>
<div class="lbl" style="top:109.5px;display:inline-block;transform:scaleX(0.8951);transform-origin:0 50%">Side</div>
<div class="lbl" style="top:186.5px;display:inline-block;transform:scaleX(0.9303);transform-origin:0 50%">Top</div>
<div class="lbl" style="top:263.5px;letter-spacing:0.197px">Bottom</div>
</div>
<div id="cb"></div><div id="cbl" style="letter-spacing:-0.1px">Exclude from parts lists</div>
</div>
<div id="cmd">
<svg class="abs" style="left:3px;top:3px" width="7" height="20" viewBox="0 0 7 20"><g fill="#c4c8ce"><rect x="0.5" y="1" width="1.3" height="1.3"/><rect x="0.5" y="3" width="1.3" height="1.3"/><rect x="0.5" y="5" width="1.3" height="1.3"/><rect x="0.5" y="7" width="1.3" height="1.3"/><rect x="0.5" y="9" width="1.3" height="1.3"/><rect x="0.5" y="11" width="1.3" height="1.3"/><rect x="0.5" y="13" width="1.3" height="1.3"/><rect x="0.5" y="15" width="1.3" height="1.3"/><rect x="0.5" y="17" width="1.3" height="1.3"/><rect x="0.5" y="19" width="1.3" height="1.3"/><rect x="2.8" y="1" width="1.3" height="1.3"/><rect x="2.8" y="3" width="1.3" height="1.3"/><rect x="2.8" y="5" width="1.3" height="1.3"/><rect x="2.8" y="7" width="1.3" height="1.3"/><rect x="2.8" y="9" width="1.3" height="1.3"/><rect x="2.8" y="11" width="1.3" height="1.3"/><rect x="2.8" y="13" width="1.3" height="1.3"/><rect x="2.8" y="15" width="1.3" height="1.3"/><rect x="2.8" y="17" width="1.3" height="1.3"/><rect x="2.8" y="19" width="1.3" height="1.3"/><rect x="5.1" y="1" width="1.3" height="1.3"/><rect x="5.1" y="3" width="1.3" height="1.3"/><rect x="5.1" y="5" width="1.3" height="1.3"/><rect x="5.1" y="7" width="1.3" height="1.3"/><rect x="5.1" y="9" width="1.3" height="1.3"/><rect x="5.1" y="11" width="1.3" height="1.3"/><rect x="5.1" y="13" width="1.3" height="1.3"/><rect x="5.1" y="15" width="1.3" height="1.3"/><rect x="5.1" y="17" width="1.3" height="1.3"/><rect x="5.1" y="19" width="1.3" height="1.3"/></g></svg>
<svg class="abs" style="left:17px;top:8px" width="9" height="9" viewBox="0 0 9 9"><path d="M1,1 L8,8 M8,1 L1,8" stroke="#d4d7dc" stroke-width="1.7"/></svg>
<svg class="abs" style="left:37px;top:4px" width="16" height="17" viewBox="0 0 16 17"><path d="M2,15 L9,7.5" stroke="#c4c8ce" stroke-width="2.6" stroke-linecap="round"/><path d="M14.5,3.2 A4,4 0 1 1 10.8,0.8 L10.5,4 L12.5,5.2Z" fill="#c4c8ce"/></svg>
<div id="cin">
<svg class="abs" style="left:4px;top:6px" width="17" height="13" viewBox="0 0 17 13"><rect x="0.6" y="0.6" width="15.8" height="11.8" fill="none" stroke="#4a4e55" stroke-width="1.2"/><rect x="0.6" y="0.6" width="15.8" height="2.6" fill="#4a4e55"/><path d="M2.5,5.5 L5,7.5 L2.5,9.5 M6.5,10 H10" stroke="#4a4e55" stroke-width="1.1" fill="none"/></svg>
<svg class="abs" style="left:23px;top:11px" width="7" height="4" viewBox="0 0 7 4"><path d="M0,0 H7 L3.5,4Z" fill="#4a4e55"/></svg>
<div id="ctx">Type a command</div>
<svg class="abs" style="left:814.3px;top:10.3px" width="7" height="3.6" viewBox="0 0 7 4"><path d="M0,4 H7 L3.5,0Z" fill="#4a4e55"/></svg>
</div></div>
</body></html>
